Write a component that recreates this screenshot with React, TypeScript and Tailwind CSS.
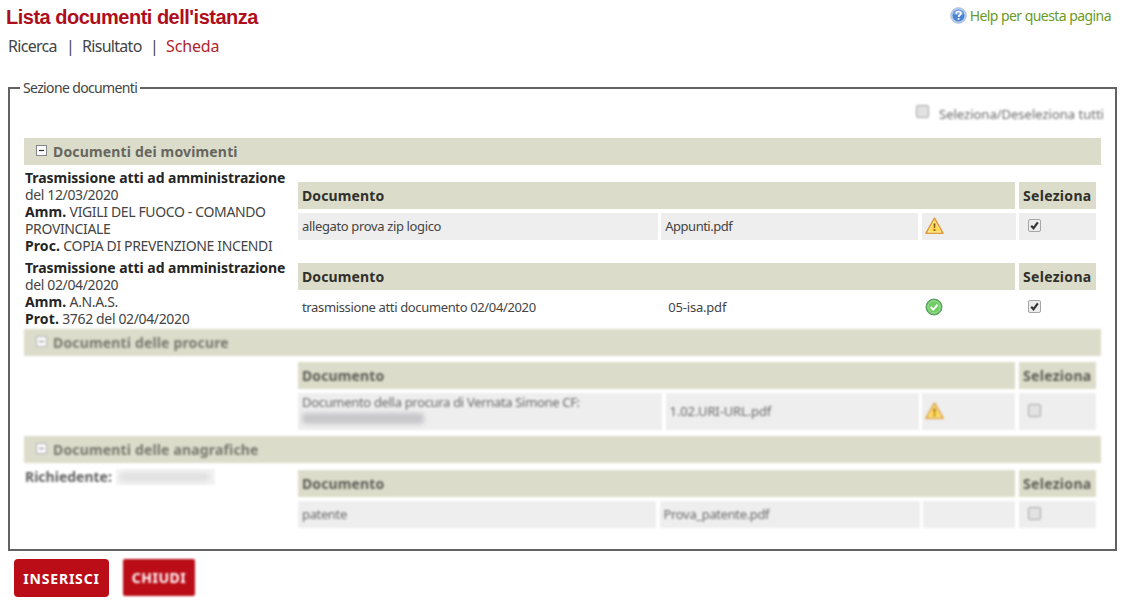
import React from "react";

function WarningIcon() {
  return (
    <svg width="19" height="18" viewBox="0 0 19 18" className="block">
      <path d="M9.5 1.2 L18 16.2 H1 Z" fill="#fbdc70" stroke="#dd9b3c" strokeWidth="1.5" strokeLinejoin="round" />
      <path d="M9.5 3.8 L15.8 15 H3.2 Z" fill="#ffd84f" stroke="#fff0b0" strokeWidth="0.8" />
      <path d="M8.5 6.5h2l-.4 4.6H8.9zM8.6 12.2h1.8v1.7H8.6z" fill="#8a5a10" />
    </svg>
  );
}

function OkIcon() {
  return (
    <svg width="18" height="18" viewBox="0 0 18 18" className="block">
      <circle cx="9" cy="9" r="8" fill="#62b862" stroke="#5a9c5e" strokeWidth="1" />
      <circle cx="9" cy="9" r="6.2" fill="#70cd66" stroke="#a4e49a" strokeWidth="1" />
      <path d="M5.6 9 L8.2 11.6 L12.6 6.8" fill="none" stroke="#f4fff2" strokeWidth="2" />
    </svg>
  );
}

function HelpIcon() {
  return (
    <svg width="17" height="17" viewBox="0 0 17 17" className="block">
      <circle cx="8.5" cy="8.5" r="7.8" fill="#b9cdec" stroke="#9db5dc" strokeWidth="0.8" />
      <circle cx="8.5" cy="8.5" r="6" fill="#4b83cf" />
      <path d="M3.2 7a5.5 5.5 0 0 1 10.6 0c-3 1.5-7.6 1.5-10.600 0z" fill="#7ba9e4" />
      <path d="M6.2 6.8c0-3 4.7-3 4.7-.2 0 1.7-2.3 1.6-2.3 3.3" fill="none" stroke="#fff" strokeWidth="1.7" />
      <rect x="7.7" y="11" width="1.8" height="1.8" fill="#fff" />
    </svg>
  );
}

function CheckBox({ checked = false }: { checked?: boolean }) {
  return (
    <svg width="13" height="13" viewBox="0 0 13 13" className="block">
      <rect x="0.5" y="0.5" width="12" height="12" rx="1.5" fill={checked ? "#ececec" : "#e2e2e2"} stroke="#a6a6a6" />
      {checked && <path d="M3.2 6.7 L5.5 9.3 L9.8 3.3" fill="none" stroke="#333" strokeWidth="2.2" />}
    </svg>
  );
}

function SectionBar({ title, blurred = false }: { title: string; blurred?: boolean }) {
  return (
    <div className={`flex h-[27px] items-center bg-[#dcdcca] pl-3 ${blurred ? "blur-[1.1px]" : ""}`}>
      <svg width="11" height="11" viewBox="0 0 11 11" className="-mt-0.5 block shrink-0">
        <rect x="0.5" y="0.5" width="10" height="10" fill="#fbfbfb" stroke={blurred ? "#b2b2b8" : "#85858c"} />
        <path d="M3 5.5h5" stroke={blurred ? "#8c8c98" : "#333"} strokeWidth="1.2" />
      </svg>
      <span className={`ml-1.5 text-[14px] font-bold tracking-[0.16px] ${blurred ? "text-[#77776f]" : "text-[#666660]"}`}>
        {title}
      </span>
    </div>
  );
}

type TableProps = {
  cols: string;
  name: React.ReactNode;
  file: string;
  fileClass: string;
  status?: React.ReactNode;
  checked?: boolean;
  plain?: boolean;
  blurred?: boolean;
  rowHeight: string;
};

function DocTable({ cols, name, file, fileClass, status, checked, plain, blurred, rowHeight }: TableProps) {
  const cell = `flex items-center ${plain ? "" : "bg-[#eeeeee]"}`;
  return (
    <div className={`w-[798px] text-[13px] ${blurred ? "text-[#6a6a6a] blur-[1.1px]" : ""}`}>
      <div
        className={`grid h-[27px] grid-cols-[717px_77px] gap-x-1 text-[14px] font-bold ${blurred ? "text-[#5c5c56]" : "text-[#30302c]"}`}
      >
        <div className="flex items-center bg-[#dcdcca] pl-1 tracking-[0.12px]">Documento</div>
        <div className="flex items-center bg-[#dcdcca] pl-1 tracking-[0.3px]">Seleziona</div>
      </div>
      <div className={`mt-[3.5px] grid ${rowHeight} ${cols}`}>
        <div className={`${cell} pl-1 tracking-[-0.36px]`}>{name}</div>
        <div className={`${cell} ${fileClass}`}>{file}</div>
        <div className={`${cell} pl-[3px]`}>{status}</div>
        <div className={`${cell} pl-[9px]`}>
          <div className="-mt-0.5">
            <CheckBox checked={checked} />
          </div>
        </div>
      </div>
    </div>
  );
}

function Label({ children }: { children: React.ReactNode }) {
  return <b className="tracking-[0.1px] text-[#252525]">{children}</b>;
}

export default function App() {
  return (
    <div className="h-[605px] w-[1122px] overflow-hidden bg-white font-['Noto_Sans','Liberation_Sans',sans-serif] text-[13px] leading-[17px] text-[#444444]">
      <header className="flex h-[34px] items-center justify-between pl-1.5 pr-[11px]">
        <h1 className="font-['Liberation_Sans',Arial,sans-serif] text-[20px] font-bold tracking-[-0.5px] text-[#ae0d1b]">
          Lista documenti dell'istanza
        </h1>
        <a className="-mt-1 flex items-center gap-[3px] text-[14px] tracking-[-0.56px] text-[#6b9a28]">
          <HelpIcon />
          Help per questa pagina
        </a>
      </header>
      <nav className="-mt-px flex h-[26px] items-center pl-2 text-[16px] tracking-[-0.7px] text-[#444444]">
        <span className="w-[58px]">Ricerca</span>
        <span className="w-4">|</span>
        <span className="w-[68px]">Risultato</span>
        <span className="w-4">|</span>
        <span className="tracking-[-0.15px] text-[#b0252c]">Scheda</span>
      </nav>

      <fieldset className="ml-2 mt-[21px] h-[471px] w-[1108px] border-[2.5px] border-[#626262] px-[14px]">
        <legend className="-ml-1 h-4 px-[3px] text-[14px] leading-4 tracking-[-0.64px]">Sezione documenti</legend>
        <div className="flex h-[42px] items-start justify-end pt-[9px] text-[#6a6a6a] blur-[1.1px]">
          <CheckBox />
          <span className="ml-2.5 mt-px w-[162px] whitespace-nowrap text-[13px]">Seleziona/Deseleziona tutti</span>
        </div>

        <div className="w-[1077px]">
          <SectionBar title="Documenti dei movimenti" />
          <div className="flex h-[90px] whitespace-nowrap pt-1">
            <div className="w-[274px] pl-px text-[14px] tracking-[-0.36px]">
              <div className="font-bold tracking-[-0.04px] text-[#252525]">Trasmissione atti ad amministrazione</div>
              <div>del 12/03/2020</div>
              <div><Label>Amm.</Label> VIGILI DEL FUOCO - COMANDO</div>
              <div>PROVINCIALE</div>
              <div><Label>Proc.</Label> COPIA DI PREVENZIONE INCENDI</div>
            </div>
            <div className="pt-[13px]">
              <DocTable cols="grid-cols-[360px_257px_94px_77px] gap-x-[3.3px]" name="allegato prova zip logico" file="Appunti.pdf" fileClass="pl-1 tracking-[-0.5px]" status={<WarningIcon />} checked rowHeight="h-[27px]" />
            </div>
          </div>
          <div className="flex h-[74px] whitespace-nowrap pt-1">
            <div className="w-[274px] pl-px text-[14px] tracking-[-0.36px]">
              <div className="font-bold tracking-[-0.04px] text-[#252525]">Trasmissione atti ad amministrazione</div>
              <div>del 02/04/2020</div>
              <div><Label>Amm.</Label> A.N.A.S.</div>
              <div><Label>Prot.</Label> 3762 del 02/04/2020</div>
            </div>
            <div className="pt-1">
              <DocTable cols="grid-cols-[360px_257px_94px_77px] gap-x-[3.3px]" name="trasmissione atti documento 02/04/2020" file="05-isa.pdf" fileClass="pl-[7px] tracking-[-0.2px]" status={<OkIcon />} checked plain rowHeight="h-[27px]" />
            </div>
          </div>

          <SectionBar title="Documenti delle procure" blurred />
          <div className="flex h-[80px] whitespace-nowrap pl-[274px] pt-[6px]">
            <DocTable
              cols="grid-cols-[364px_253px_93px_77px] gap-x-[3.6px]"
              name={
                <div className="h-[34px] tracking-[-0.32px]">
                  <div>Documento della procura di Vernata Simone CF:</div>
                  <div className="mt-0.5 h-[11px] w-[122px] rounded bg-[#c7c7ca] blur-[2px]" />
                </div>
              }
              file="1.02.URI-URL.pdf"
              fileClass="pl-1 tracking-[-0.12px]"
              status={<WarningIcon />}
              blurred
              rowHeight="h-[37px]"
            />
          </div>

          <SectionBar title="Documenti delle anagrafiche" blurred />
          <div className="flex h-[80px] whitespace-nowrap pt-[5px]">
            <div className="flex w-[274px] pl-px blur-[1px]">
              <b className="text-[14px] text-[#606060]">Richiedente:</b>
              <div className="ml-1 mt-px h-4 w-[99px] bg-[#f2f2f2] pl-1 pt-1">
                <div className="h-2 w-[90px] rounded bg-[#dfdfdf] blur-[2px]" />
              </div>
            </div>
            <div className="pt-0.5">
              <DocTable cols="grid-cols-[358px_260px_92px_77px] gap-x-[3.6px]" name="patente" file="Prova_patente.pdf" fileClass="pl-1 tracking-[-0.35px]" blurred rowHeight="h-[27px]" />
            </div>
          </div>
        </div>
      </fieldset>

      <div className="flex gap-[14px] pl-[14px] pt-2 text-[14px] font-bold text-white">
        <button className="h-[38px] w-[95px] rounded-[4px] bg-[#bb0d18] tracking-[0.8px]">INSERISCI</button>
        <button className="h-[37px] w-[72px] rounded-[2px] bg-[#bb0d18] tracking-[0.5px] blur-[1.3px]">CHIUDI</button>
      </div>
    </div>
  );
}
